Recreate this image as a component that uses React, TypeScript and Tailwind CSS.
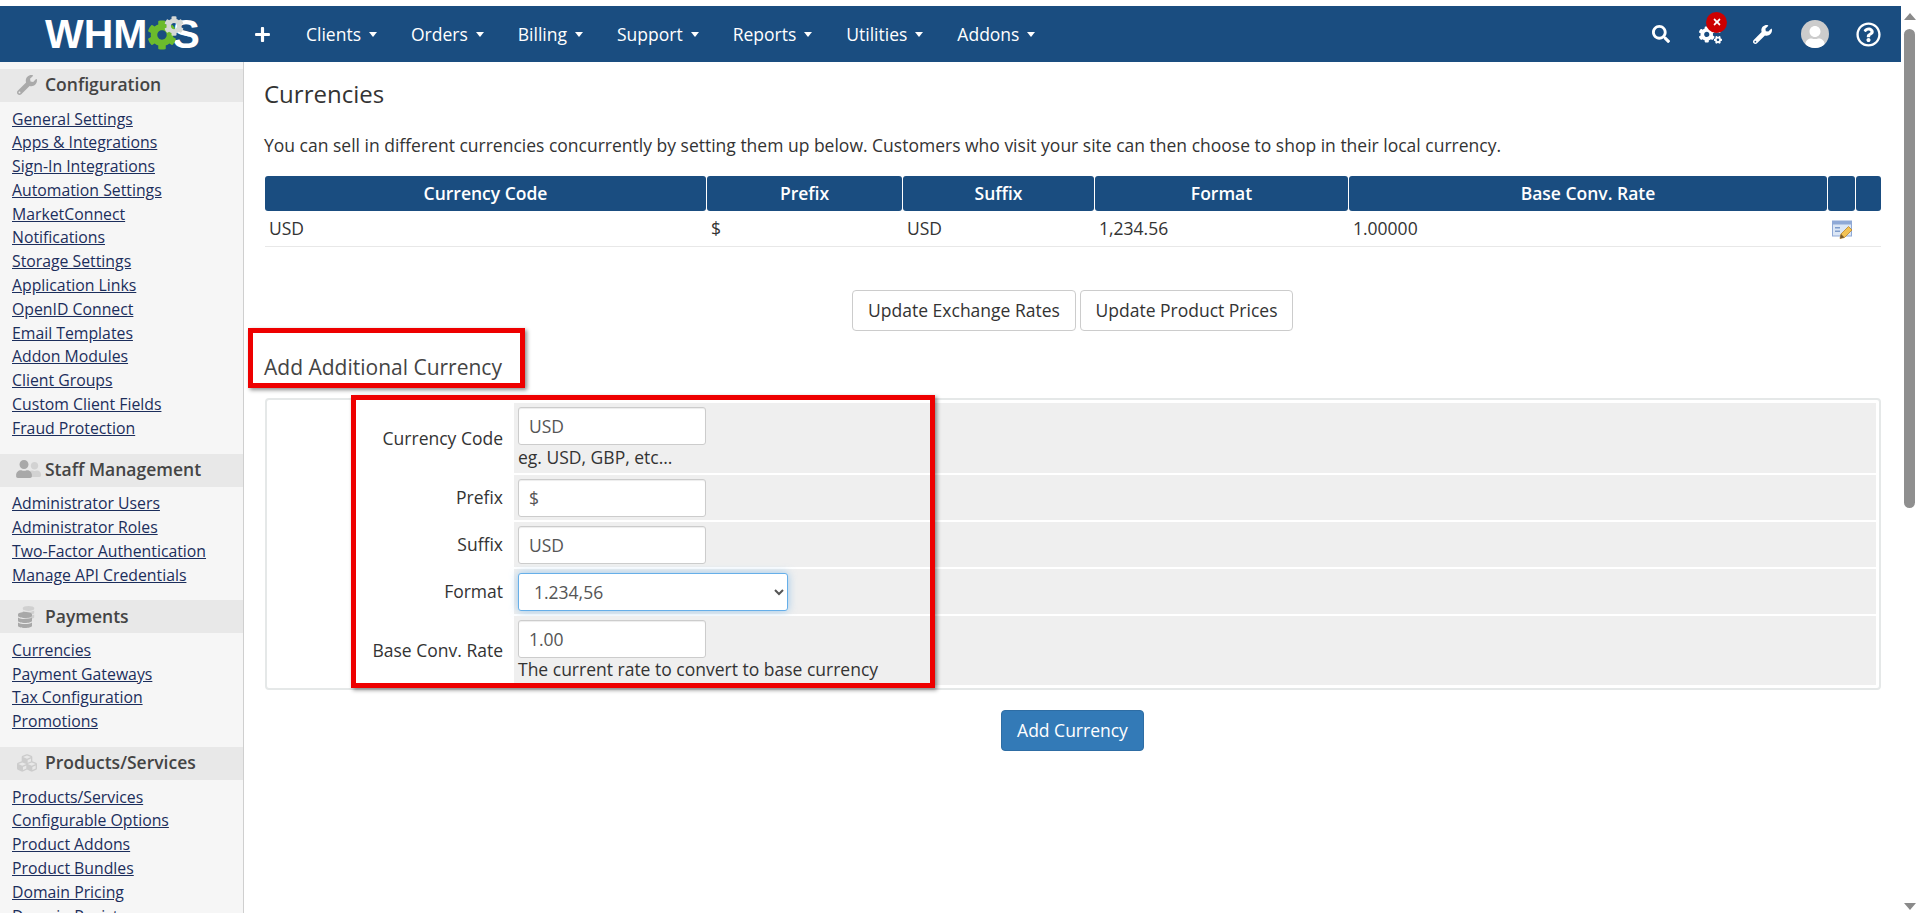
import React from 'react';
import {
  FaCog,
  FaCogs,
  FaCubes,
  FaDatabase,
  FaPlus,
  FaRegQuestionCircle,
  FaSearch,
  FaTimes,
  FaUser,
  FaWrench,
} from 'react-icons/fa';

const navItems = ['Clients', 'Orders', 'Billing', 'Support', 'Reports', 'Utilities', 'Addons'];

const sections = [
  {
    title: 'Configuration',
    icon: <FaWrench className="text-[20px] text-[#aaaaaa]" />,
    links: [
      'General Settings',
      'Apps & Integrations',
      'Sign-In Integrations',
      'Automation Settings',
      'MarketConnect',
      'Notifications',
      'Storage Settings',
      'Application Links',
      'OpenID Connect',
      'Email Templates',
      'Addon Modules',
      'Client Groups',
      'Custom Client Fields',
      'Fraud Protection',
    ],
  },
  {
    title: 'Staff Management',
    icon: (
      <span className="relative -ml-[2px] block h-[18px] w-[24px]">
        <FaUser className="absolute left-[12px] top-[2px] text-[15px] text-[#d2d2d2]" />
        <FaUser className="absolute left-0 top-0 text-[18px] text-[#a8a8a8]" />
      </span>
    ),
    links: ['Administrator Users', 'Administrator Roles', 'Two-Factor Authentication', 'Manage API Credentials'],
  },
  {
    title: 'Payments',
    icon: (
      <span className="relative block h-[20px] w-[20px]">
        <FaDatabase className="absolute left-[5px] top-0 text-[13px] text-[#d0d0d0]" />
        <FaDatabase className="absolute left-0 top-[6px] text-[16px] text-[#a8a8a8]" />
      </span>
    ),
    links: ['Currencies', 'Payment Gateways', 'Tax Configuration', 'Promotions'],
  },
  {
    title: 'Products/Services',
    icon: <FaCubes className="text-[20px] text-[#cccccc]" />,
    links: ['Products/Services', 'Configurable Options', 'Product Addons', 'Product Bundles', 'Domain Pricing', 'Domain Registrars'],
  },
];

const Logo = () => (
  <div className="flex w-[156px] items-center font-['Liberation_Sans',sans-serif] text-[41px] font-bold leading-none text-white">
    <span>WHM</span>
    <span className="relative z-10 h-[32px] w-[25px] shrink-0">
      <FaCog className="absolute bottom-0 left-0 text-[30px] text-[#6cbb2c]" />
      <FaCog className="absolute left-[17px] -top-[2px] text-[20px] text-[#d5d8d5]" />
    </span>
    <span>S</span>
  </div>
);

const Caret = () => (
  <span className="ml-[8px] inline-block h-0 w-0 border-x-[4.5px] border-t-[5px] border-x-transparent border-t-white" />
);

const TopBar = () => (
  <header className="flex h-[56px] items-center bg-[#1a4d80] text-white">
    <div className="ml-[45px] flex w-[209px] items-center">
      <Logo />
    </div>
    <FaPlus className="text-[17px]" />
    <nav className="ml-[35px] flex items-center gap-[34px] text-[17.5px]">
      {navItems.map((item) => (
        <span key={item} className="flex items-center">
          {item}
          <Caret />
        </span>
      ))}
    </nav>
    <div className="ml-auto flex items-center pr-[20px]">
      <FaSearch className="text-[18px]" />
      <span className="relative ml-[29px]">
        <FaCogs className="text-[23px]" />
        <span className="absolute -right-[5px] -top-[11px] flex h-[21px] w-[21px] items-center justify-center rounded-full bg-[#cc0000]">
          <FaTimes className="text-[10px]" />
        </span>
      </span>
      <FaWrench className="ml-[31px] text-[19px]" />
      <span className="ml-[29px] flex h-[28px] w-[28px] items-end justify-center overflow-hidden rounded-full bg-[#cccccc]">
        <FaUser className="text-[22px] text-white" />
      </span>
      <FaRegQuestionCircle className="ml-[27px] text-[25px]" />
    </div>
  </header>
);

const Sidebar = () => (
  <aside className="h-[851px] w-[244px] shrink-0 overflow-hidden border-r border-[#cfcfcf] bg-[#f6f6f6] pt-[7px]">
    {sections.map((section) => (
      <div key={section.title} className="mb-[13px]">
        <div className="flex h-[33px] items-center bg-[#e8e8e8] pb-[2px] pl-[17px] text-[17.5px] font-semibold text-[#444444]">
          <span className="flex w-[28px] items-center">{section.icon}</span>
          {section.title}
        </div>
        <ul className="mt-[5.5px]">
          {section.links.map((link) => (
            <li key={link} className="pl-[12px] text-[15.8px] leading-[23.8px] text-[#1c2e5c] underline">
              {link}
            </li>
          ))}
        </ul>
      </div>
    ))}
  </aside>
);

const EditIcon = () => (
  <svg width="21" height="20" viewBox="0 0 21 20">
    <rect x="0.5" y="1" width="19" height="15" fill="#dbe6f5" stroke="#8fa9d6" />
    <rect x="0.5" y="1" width="19" height="3.5" fill="#8fa9d6" />
    <rect x="3" y="7" width="5" height="1.5" fill="#7f9ccb" />
    <rect x="3" y="10.5" width="5" height="1.5" fill="#7f9ccb" />
    <path d="M8 18.5l1-4.5L16.5 6.5l3.5 3.5L12.5 17.5z" fill="#f3c253" stroke="#b9862b" strokeWidth="0.8" />
    <path d="M8 18.5l1-4.5 3.5 3.5z" fill="#7a5a2b" />
  </svg>
);

const CurrencyTable = () => (
  <div className="mt-[19px] w-[1616px]">
    <div className="grid h-[35px] grid-cols-[441px_195px_191px_253px_478px_27px_25px] gap-x-px text-[17.5px] font-semibold text-white">
      {['Currency Code', 'Prefix', 'Suffix', 'Format', 'Base Conv. Rate', '', ''].map((head, i) => (
        <div key={i} className="flex items-center justify-center rounded-[3px] bg-[#1a4d80]">
          {head}
        </div>
      ))}
    </div>
    <div className="grid h-[36px] grid-cols-[441px_195px_191px_253px_478px_27px_25px] gap-x-px border-b border-[#e8e8e8] text-[17.5px] text-[#333333]">
      {['USD', '$', 'USD', '1,234.56', '1.00000'].map((value, i) => (
        <div key={i} className="flex items-center px-[4px]">
          {value}
        </div>
      ))}
      <div className="flex items-center pl-[4px] pt-[3px]">
        <EditIcon />
      </div>
      <div />
    </div>
  </div>
);

const inputClass =
  'block h-[38px] w-[188px] rounded-[3px] border border-[#cccccc] bg-white pl-[10px] text-[17.5px] text-[#555555] shadow-[inset_0_1px_1px_rgba(0,0,0,0.075)]';

const FormRow = ({ label, height, children }: { label: string; height: string; children: React.ReactNode }) => (
  <div className={`grid grid-cols-[244px_1fr] ${height}`}>
    <div className="flex items-center justify-end pr-[11px] text-[17.5px] text-[#333333]">{label}</div>
    <div className="bg-[#efefef] pl-[4px] pt-[4px] text-[17.5px] leading-[24px] text-[#333333]">{children}</div>
  </div>
);

const AddCurrencyForm = () => (
  <form className="mt-[17px] flex w-[1616px] flex-col gap-[2px] rounded-[4px] border-2 border-[#e5e8e8] p-[3px]">
    <FormRow label="Currency Code" height="h-[70px]">
      <input className={inputClass} defaultValue="USD" />
      <div>eg. USD, GBP, etc...</div>
    </FormRow>
    <FormRow label="Prefix" height="h-[45px]">
      <input className={inputClass} defaultValue="$" />
    </FormRow>
    <FormRow label="Suffix" height="h-[45px]">
      <input className={inputClass} defaultValue="USD" />
    </FormRow>
    <FormRow label="Format" height="h-[45px]">
      <select
        className="block h-[38px] w-[270px] rounded-[3px] border border-[#66afe9] bg-white pl-[11px] text-[17.5px] text-[#555555] shadow-[0_0_8px_rgba(102,175,233,0.6)]"
        defaultValue="1.234,56"
      >
        <option>1234.56</option>
        <option>1,234.56</option>
        <option>1.234,56</option>
        <option>1,234</option>
      </select>
    </FormRow>
    <FormRow label="Base Conv. Rate" height="h-[69px]">
      <input className={inputClass} defaultValue="1.00" />
      <div className="-mt-px">The current rate to convert to base currency</div>
    </FormRow>
  </form>
);

const redBox = 'pointer-events-none absolute border-[5px] border-[#ee0000] shadow-[2px_2px_4px_rgba(0,0,0,0.45)]';

const Main = () => (
  <main className="relative flex-1 pl-[20px] pr-[21px] pt-[15px] text-[#333333]">
    <h1 className="text-[24px] leading-[33px]">Currencies</h1>
    <p className="mt-[23px] text-[17.5px] leading-[24px]">
      You can sell in different currencies concurrently by setting them up below. Customers who visit your site can then choose to shop in their local currency.
    </p>
    <div className="ml-px">
      <CurrencyTable />
    </div>
    <div className="mt-[43px] flex justify-center gap-[4px]">
      <button className="h-[41px] w-[224px] rounded-[4px] border border-[#cccccc] bg-white text-[17.5px] text-[#333333]">
        Update Exchange Rates
      </button>
      <button className="h-[41px] w-[213px] rounded-[4px] border border-[#cccccc] bg-white text-[17.5px] text-[#333333]">
        Update Product Prices
      </button>
    </div>
    <h2 className="mt-[22px] text-[21px] leading-[28px] text-[#444444]">Add Additional Currency</h2>
    <div className="ml-px">
      <AddCurrencyForm />
    </div>
    <div className="mt-[20px] flex justify-center">
      <button className="h-[41px] w-[143px] rounded-[4px] border border-[#2e6da4] bg-[#337ab7] text-[17.5px] text-white">
        Add Currency
      </button>
    </div>
    {/* screenshot annotations */}
    <div className={`${redBox} left-[4px] top-[266px] h-[60px] w-[277px]`} />
    <div className={`${redBox} left-[107px] top-[333px] h-[293px] w-[584px]`} />
  </main>
);

const Scrollbar = () => (
  <div className="flex w-[17px] shrink-0 flex-col items-center bg-white pt-[13px]">
    <span className="h-0 w-0 border-x-[6px] border-b-[7px] border-x-transparent border-b-[#8a8a8a]" />
    <span className="mt-[9px] h-[479px] w-[11px] rounded-full bg-[#8f8f8f]" />
    <span className="mb-[3px] mt-auto h-0 w-0 border-x-[6px] border-t-[7px] border-x-transparent border-t-[#8a8a8a]" />
  </div>
);

export default function App() {
  return (
    <div className="flex h-[913px] overflow-hidden bg-white font-['Open_Sans',sans-serif]">
      <div className="flex min-w-0 flex-1 flex-col pt-[6px]">
        <TopBar />
        <div className="flex flex-1">
          <Sidebar />
          <Main />
        </div>
      </div>
      <Scrollbar />
    </div>
  );
}
